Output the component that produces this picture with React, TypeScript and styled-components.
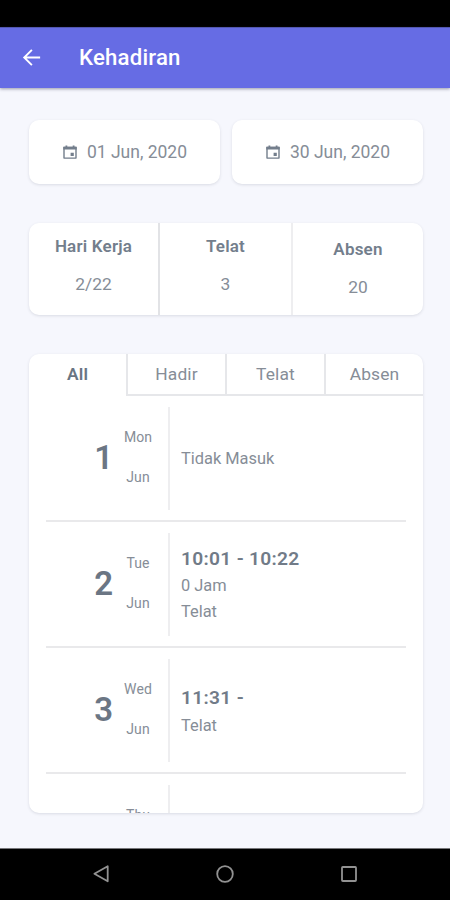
import React from "react";
import styled, { createGlobalStyle } from "styled-components";

const GlobalStyle = createGlobalStyle`
  * { box-sizing: border-box; }
  body {
    margin: 0;
    background: #f6f7fd;
    font-family: Roboto, "Liberation Sans", sans-serif;
    color: #868d97;
  }
  button { font: inherit; color: inherit; border: 0; padding: 0; background: none; }
`;

const Screen = styled.div`
  width: 450px;
  height: 900px;
  display: flex;
  flex-direction: column;
  overflow: hidden;
  background: #f6f7fd;
`;

const StatusBar = styled.div`
  flex: 0 0 27px;
  background: #000;
`;

const Header = styled.header`
  flex: 0 0 61px;
  display: flex;
  align-items: center;
  padding: 0 0 2px 20px;
  gap: 36px;
  background: #666ce4;
  border-top: 1px solid #5357b0;
  box-shadow: 0 1px 3px rgba(40, 40, 70, 0.45);
  color: #fff;
`;

const BackButton = styled.button`
  display: flex;
  width: 23px;
  height: 23px;
`;

const Title = styled.h1`
  margin: 0;
  font-size: 22.2px;
  line-height: 28px;
  font-weight: 500;
  letter-spacing: 0.2px;
`;

const Content = styled.main`
  flex: 1;
  min-height: 0;
  display: flex;
  flex-direction: column;
  padding: 32px 27px 35px 29px;
`;

const Card = styled.div`
  background: #fff;
  border-radius: 10px;
  box-shadow: 0 1px 3px rgba(60, 65, 90, 0.15);
`;

const DateRow = styled.div`
  display: grid;
  grid-template-columns: 191px 191px;
  gap: 12px;
`;

const DateCard = styled(Card)`
  height: 64px;
  display: flex;
  align-items: center;
  justify-content: center;
  gap: 9px;
  padding-bottom: 1px;
  font-size: 17.5px;
  line-height: 24px;
`;

const Stats = styled(Card)`
  flex: 0 0 92px;
  margin-top: 39px;
  display: grid;
  grid-template-columns: 131px 133px 130px;
  overflow: hidden;
`;

const Stat = styled.div<{ $lowered?: boolean; $divider?: string }>`
  display: flex;
  flex-direction: column;
  align-items: center;
  gap: 14px;
  padding-top: ${(p) => (p.$lowered ? 14 : 11)}px;
  border-right: ${(p) => (p.$divider ? `2px solid ${p.$divider}` : "0")};
  font-size: 17.4px;
  line-height: 24px;
`;

const StatLabel = styled.span`
  font-weight: 600;
  font-size: 17px;
  letter-spacing: 0.2px;
  color: #737e8c;
`;

const Panel = styled(Card)`
  flex: 1;
  min-height: 0;
  margin-top: 39px;
  display: flex;
  flex-direction: column;
  overflow: hidden;
`;

const Tabs = styled.div`
  flex: 0 0 42px;
  display: grid;
  grid-template-columns: 97px 99px 99px 99px;
`;

const Tab = styled.button<{ $active?: boolean }>`
  font-size: 17.4px;
  line-height: 24px;
  letter-spacing: 0.15px;
  padding-bottom: ${(p) => (p.$active ? 2 : 1)}px;
  font-weight: ${(p) => (p.$active ? 600 : 400)};
  color: ${(p) => (p.$active ? "#697583" : "#868d97")};
  border-bottom: ${(p) => (p.$active ? "0" : "2px solid #e6e7ea")};
  border-left: ${(p) => (p.$active ? "0" : "2px solid #e6e7ea")};
`;

const List = styled.div`
  flex: 1;
  min-height: 0;
  overflow: hidden;
  padding: 0 17px;
`;

const Entry = styled.article`
  height: 126px;
  display: grid;
  grid-template-columns: 67px 49px 8px 1fr;
  align-items: center;
  border-bottom: 2px solid #e9e9eb;
`;

const DayNumber = styled.span`
  text-align: right;
  font-size: 33px;
  line-height: 40px;
  font-weight: 600;
  color: #6b7684;
`;

const DayNames = styled.div`
  display: flex;
  flex-direction: column;
  align-items: center;
  gap: 20px;
  padding: 0 0 2px 1px;
  font-size: 14px;
  line-height: 20px;
  letter-spacing: 0.1px;
`;

const Divider = styled.i`
  width: 2px;
  height: 103px;
  justify-self: end;
  background: #eeeef0;
`;

const Details = styled.div`
  display: flex;
  flex-direction: column;
  padding: 1px 0 0 11px;
  font-size: 16.4px;
  line-height: 26px;
`;

const Hours = styled.strong<{ $spaced?: boolean }>`
  font-size: 19.2px;
  line-height: ${(p) => (p.$spaced ? 30 : 29)}px;
  font-weight: 600;
  letter-spacing: 0.3px;
  color: #717b88;
`;

const NavBar = styled.nav`
  flex: 0 0 52px;
  display: grid;
  grid-template-columns: 1fr 46px 1fr;
  align-items: center;
  padding: 0 91px 2px;
  background: #000;
  border-top: 1px solid #77777a;
`;

const NavButton = styled.button<{ $align: string }>`
  display: flex;
  justify-self: ${(p) => p.$align};
`;

const BackIcon = () => (
  <svg width="23" height="23" viewBox="0 0 24 24" fill="#fff">
    <path d="M21 11H6.83l6.29-6.29L11.7 3.3 3 12l8.7 8.7 1.41-1.41L6.83 13H21z" />
  </svg>
);

const CalendarIcon = () => (
  <svg width="16" height="16" viewBox="0 0 16 16" fill="none">
    <path d="M2 3.4h12v10.7H2z" stroke="#737e8c" strokeWidth="1.4" strokeLinejoin="round" />
    <path d="M1.3 2.8h13.4v2.7H1.3zM3.5 1.4h1.8v2H3.5zM10.7 1.4h1.8v2h-1.8zM8.6 8.8h3.2V12H8.6z" fill="#737e8c" />
  </svg>
);

const stats = [
  { label: "Hari Kerja", value: "2/22", divider: "#e2e3e6" },
  { label: "Telat", value: "3", divider: "#eeeef0" },
  { label: "Absen", value: "20", lowered: true },
];

const entries = [
  { day: 1, name: "Mon", lines: ["Tidak Masuk"] },
  { day: 2, name: "Tue", hours: "10:01 - 10:22", lines: ["0 Jam", "Telat"] },
  { day: 3, name: "Wed", hours: "11:31 -", lines: ["Telat"] },
  { day: 4, name: "Thu", lines: [] },
];

export default function App() {
  return (
    <>
      <GlobalStyle />
      <Screen>
        <StatusBar />
        <Header>
          <BackButton aria-label="Kembali"><BackIcon /></BackButton>
          <Title>Kehadiran</Title>
        </Header>
        <Content>
          <DateRow>
            {["01 Jun, 2020", "30 Jun, 2020"].map((date) => (
              <DateCard key={date}><CalendarIcon />{date}</DateCard>
            ))}
          </DateRow>
          <Stats>
            {stats.map((s) => (
              <Stat key={s.label} $divider={s.divider} $lowered={s.lowered}>
                <StatLabel>{s.label}</StatLabel>
                <span>{s.value}</span>
              </Stat>
            ))}
          </Stats>
          <Panel>
            <Tabs>
              {["All", "Hadir", "Telat", "Absen"].map((t) => (
                <Tab key={t} $active={t === "All"}>{t}</Tab>
              ))}
            </Tabs>
            <List>
              {entries.map((e) => (
                <Entry key={e.day}>
                  <DayNumber>{e.day}</DayNumber>
                  <DayNames><span>{e.name}</span><span>Jun</span></DayNames>
                  <Divider />
                  <Details>
                    {e.hours && <Hours $spaced={e.lines.length === 1}>{e.hours}</Hours>}
                    {e.lines.map((l) => <span key={l}>{l}</span>)}
                  </Details>
                </Entry>
              ))}
            </List>
          </Panel>
        </Content>
        <NavBar>
          <NavButton $align="start" aria-label="Back">
            <svg width="20" height="20" viewBox="0 0 20 20" fill="none" stroke="#929292" strokeWidth="1.8" strokeLinejoin="round">
              <path d="M16.7 2.3v15L3.4 9.8z" />
            </svg>
          </NavButton>
          <NavButton $align="center" aria-label="Home">
            <svg width="20" height="20" viewBox="0 0 20 20" fill="none" stroke="#929292" strokeWidth="1.8">
              <circle cx="10" cy="10" r="7.8" />
            </svg>
          </NavButton>
          <NavButton $align="end" aria-label="Recent">
            <svg width="20" height="20" viewBox="0 0 20 20" fill="none" stroke="#929292" strokeWidth="1.8">
              <rect x="3" y="3" width="14" height="14" rx="0.8" />
            </svg>
          </NavButton>
        </NavBar>
      </Screen>
    </>
  );
}
